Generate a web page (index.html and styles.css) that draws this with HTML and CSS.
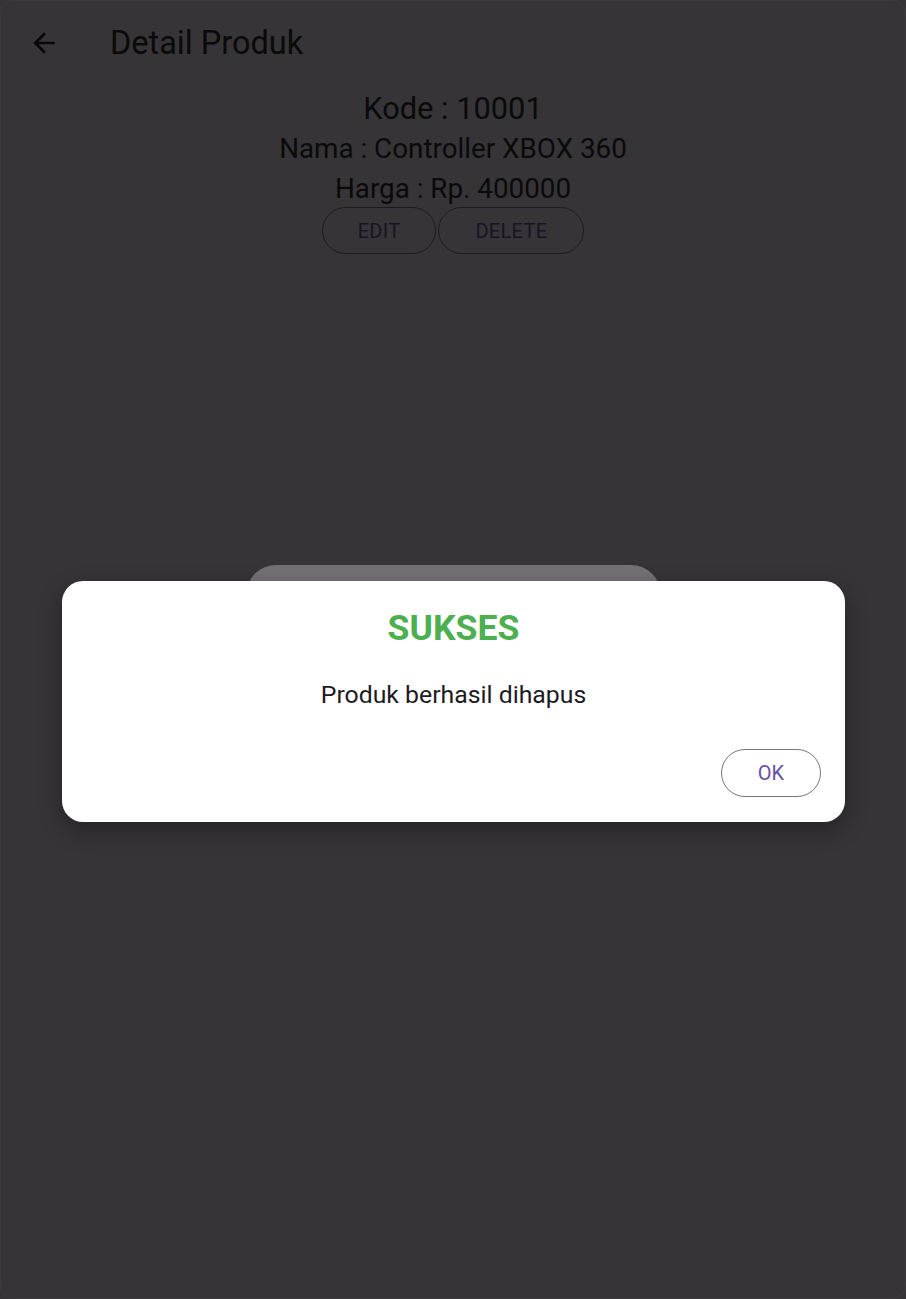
FILE: index.html
```html
<!DOCTYPE html>
<html>
<head>
<meta charset="utf-8">
<link rel="stylesheet" href="styles.css">
</head>
<body>
<div class="screen">
  <header class="appbar">
    <svg class="back" viewBox="0 0 24 24" width="30" height="30"><path d="M20 11H7.83l5.59-5.59L12 4l-8 8 8 8 1.41-1.41L7.83 13H20v-2z" fill="currentColor"/></svg>
    <h1 class="title">Detail Produk</h1>
  </header>
  <main class="detail">
    <p class="line big">Kode : 10001</p>
    <p class="line">Nama : Controller XBOX 360</p>
    <p class="line">Harga : Rp. 400000</p>
    <div class="actions">
      <button class="obtn edit">EDIT</button>
      <button class="obtn delete">DELETE</button>
    </div>
  </main>
  <div class="under-dialog"></div>
  <div class="dialog">
    <h2 class="dlg-title">SUKSES</h2>
    <p class="dlg-text">Produk berhasil dihapus</p>
    <div class="dlg-actions">
      <button class="ok">OK</button>
    </div>
  </div>
</div>
</body>
</html>
```
FILE: styles.css
```css
html, body {
  margin: 0;
  padding: 0;
  background: #363437;
}
body {
  font-family: Roboto, "Noto Sans", sans-serif;
  width: 906px;
  height: 1299px;
  overflow: hidden;
}
.screen {
  position: relative;
  width: 906px;
  height: 1299px;
  box-sizing: border-box;
  border: 1px solid #3d3b3e;
  border-radius: 14px;
  background: #363437;
}
.appbar {
  display: flex;
  align-items: center;
  height: 84px;
  padding-left: 27px;
  color: #080808;
}
.back {
  width: 32px;
  height: 32px;
  margin-right: 50px;
}
.title {
  margin: 0;
  font-weight: 400;
  font-size: 32.5px;
  color: #0a0a0a;
}
.detail {
  display: flex;
  flex-direction: column;
  align-items: center;
  margin-top: 4px;
}
.line {
  margin: 0;
  font-size: 27.8px;
  line-height: 40px;
  color: #0a0a0a;
}
.line.big {
  font-size: 30.8px;
}
.actions {
  display: flex;
  gap: 2px;
  margin-top: -2px;
}
.obtn {
  font-family: Roboto, sans-serif;
  font-size: 20px;
  height: 47px;
  border-radius: 24px;
  border: 1.5px solid #1b1a1c;
  background: transparent;
  color: #171325;
  padding: 0 35px;
  letter-spacing: 0.3px;
}
.obtn.delete {
  padding: 0 36px;
}
.under-dialog {
  position: absolute;
  left: 245px;
  top: 564px;
  width: 415px;
  height: 200px;
  border-radius: 30px;
  background: #747073;
}
.dialog {
  position: absolute;
  left: 61px;
  top: 580px;
  width: 783px;
  height: 241px;
  box-sizing: border-box;
  background: #ffffff;
  border-radius: 21px;
  box-shadow: 0 8px 22px rgba(0,0,0,0.35);
  display: flex;
  flex-direction: column;
  align-items: center;
  padding-top: 25px;
}
.dlg-title {
  margin: 0;
  font-size: 35.6px;
  font-weight: 700;
  color: #4caf50;
  line-height: 44px;
}
.dlg-text {
  margin: 29px 0 0;
  font-size: 24.8px;
  color: #1c1b1f;
  line-height: 32px;
}
.dlg-actions {
  align-self: stretch;
  display: flex;
  justify-content: flex-end;
  padding-right: 24px;
  margin-top: 38px;
}
.ok {
  width: 100px;
  height: 48px;
  border-radius: 24px;
  border: 1.5px solid #79747e;
  background: transparent;
  color: #6750a4;
  font-family: Roboto, sans-serif;
  font-size: 20px;
}
```
